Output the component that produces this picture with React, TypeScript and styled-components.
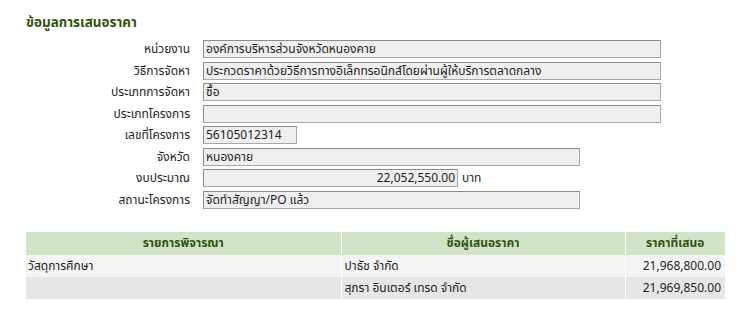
import React from "react";
import styled, { createGlobalStyle } from "styled-components";

const Global = createGlobalStyle`
  html, body { margin: 0; padding: 0; background: #ffffff; }
  body {
    font-family: Tahoma, "Noto Sans Thai", Loma, Garuda, "DejaVu Sans", sans-serif;
    font-size: 12px;
    color: #1e1e1e;
  }
`;

const Page = styled.div`
  width: 750px;
  height: 324px;
  box-sizing: border-box;
  padding: 14px 25px 0 26px;
  overflow: hidden;
`;

const Title = styled.h2`
  margin: 0 0 8px 0;
  font-size: 13.5px;
  font-weight: bold;
  color: #34520f;
  line-height: 18px;
`;

const Form = styled.div`
  display: grid;
  grid-template-columns: 164px auto;
  column-gap: 13px;
  row-gap: 3.57px;
  align-items: center;
`;

const Label = styled.div`
  text-align: right;
  line-height: 18px;
  white-space: nowrap;
`;

const FieldRow = styled.div`
  display: flex;
  align-items: center;
  gap: 4px;
`;

const Box = styled.div<{ $w: number; $right?: boolean }>`
  width: ${(p) => p.$w}px;
  height: 18px;
  box-sizing: border-box;
  border: 1px solid #8c8c8c;
  border-right-color: #a8a8a8;
  border-bottom-color: #a8a8a8;
  background: #efefef;
  padding: 0 2px;
  line-height: 16px;
  white-space: nowrap;
  overflow: hidden;
  text-align: ${(p) => (p.$right ? "right" : "left")};
`;

const Unit = styled.span`
  line-height: 18px;
`;

const Table = styled.table`
  margin-top: 23px;
  width: 699px;
  border-collapse: collapse;
  table-layout: fixed;
`;

const Th = styled.th<{ $w: number }>`
  box-sizing: border-box;
  width: ${(p) => p.$w}px;
  height: 23px;
  padding: 0 4px;
  background: #d2e4c8;
  color: #34520f;
  font-weight: bold;
  text-align: center;
  border-left: 1px solid #ffffff;
  &:first-child { border-left: none; }
`;

const Tr = styled.tr<{ $alt?: boolean }>`
  background: ${(p) => (p.$alt ? "#e6e6e6" : "#f4f4f4")};
`;

const Td = styled.td<{ $num?: boolean }>`
  box-sizing: border-box;
  height: 22px;
  padding: 0 4px 0 3px;
  text-align: ${(p) => (p.$num ? "right" : "left")};
  border-left: 1px solid #ffffff;
  white-space: nowrap;
  &:first-child { border-left: none; padding-left: 2px; }
`;

type Field = { label: string; value: string; w: number; right?: boolean; unit?: string };

const fields: Field[] = [
  { label: "หน่วยงาน", value: "องค์การบริหารส่วนจังหวัดหนองคาย", w: 458 },
  { label: "วิธีการจัดหา", value: "ประกวดราคาด้วยวิธีการทางอิเล็กทรอนิกส์โดยผ่านผู้ให้บริการตลาดกลาง", w: 458 },
  { label: "ประเภทการจัดหา", value: "ซื้อ", w: 458 },
  { label: "ประเภทโครงการ", value: "", w: 458 },
  { label: "เลขที่โครงการ", value: "56105012314", w: 94 },
  { label: "จังหวัด", value: "หนองคาย", w: 377 },
  { label: "งบประมาณ", value: "22,052,550.00", w: 255, right: true, unit: "บาท" },
  { label: "สถานะโครงการ", value: "จัดทำสัญญา/PO แล้ว", w: 377 },
];

const offers = [
  { item: "วัสดุการศึกษา", bidder: "ปาธัช จำกัด", price: "21,968,800.00" },
  { item: "", bidder: "สุภรา อินเตอร์ เทรด จำกัด", price: "21,969,850.00" },
];

export default function App() {
  return (
    <>
      <Global />
      <Page>
        <Title>ข้อมูลการเสนอราคา</Title>
        <Form>
          {fields.map((f) => (
            <React.Fragment key={f.label}>
              <Label>{f.label}</Label>
              <FieldRow>
                <Box $w={f.w} $right={f.right}>{f.value}</Box>
                {f.unit && <Unit>{f.unit}</Unit>}
              </FieldRow>
            </React.Fragment>
          ))}
        </Form>
        <Table>
          <thead>
            <tr>
              <Th $w={315}>รายการพิจารณา</Th>
              <Th $w={284}>ชื่อผู้เสนอราคา</Th>
              <Th $w={100}>ราคาที่เสนอ</Th>
            </tr>
          </thead>
          <tbody>
            {offers.map((o, i) => (
              <Tr key={o.bidder} $alt={i % 2 === 1}>
                <Td>{o.item}</Td>
                <Td>{o.bidder}</Td>
                <Td $num>{o.price}</Td>
              </Tr>
            ))}
          </tbody>
        </Table>
      </Page>
    </>
  );
}
